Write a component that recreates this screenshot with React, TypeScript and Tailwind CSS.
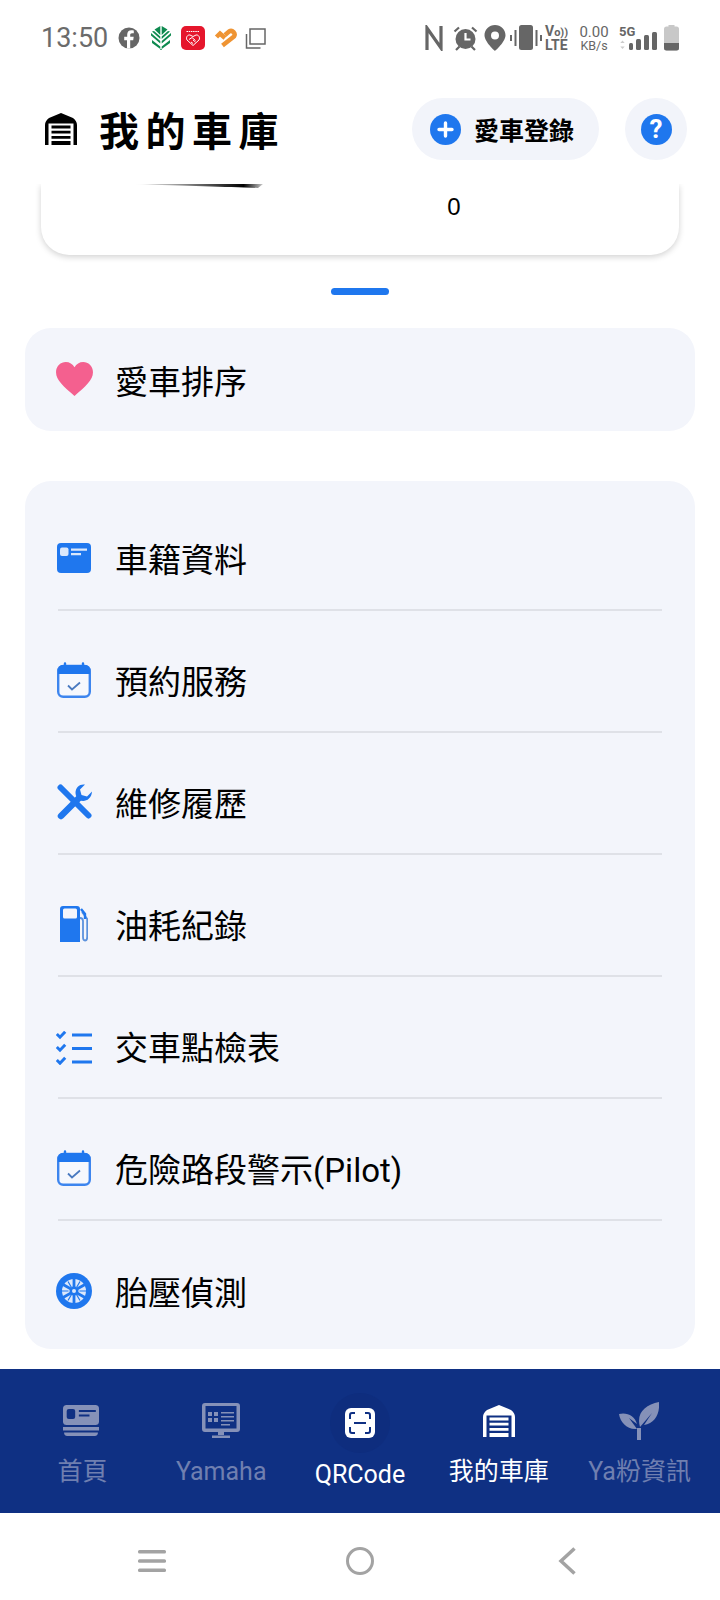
import type { ReactNode } from 'react';

const BLUE = '#1f77ee';
const FADED = '#8591b8';
const NAV = '#0f3083';

function StatusLeft() {
  return (
    <div className="flex items-center">
      <span className="text-[27px] leading-none text-[#6b6b6b] font-['Roboto',sans-serif] ml-[41px] w-[75px]">13:50</span>
      <svg width="22" height="22" viewBox="0 0 22 22" className="ml-[2px]">
        <circle cx="11" cy="11" r="10.500" fill="#666" />
        <path d="M12.200 21.500V13.200h3l.5-3.400h-3.500V8c0-1 .5-1.700 1.800-1.700h1.800V3.500c-.8-.1-1.600-.2-2.400-.2-2.500 0-4.200 1.500-4.200 4.200v2.300H6.200v3.400h2.800v8.300z" fill="#fff" />
      </svg>
      <svg width="20" height="24" viewBox="0 0 20 24" className="ml-[11px]">
        <path d="M9.300 0 3.500 3.500 9.300 9zM10.700 0l5.800 3.500L10.700 9zM1 5.500 9.300 13v-2.500L3 5zM19 5.500 10.700 13v-2.500L17 5zM0 9.500l9.300 8V15L0 7zM20 9.500l-9.300 8V15L20 7zM1 14l8.300 6.500V24h1.400v-3.500L19 14v3l-8.300 6h-1.400L1 17z" fill="#0e8a4f" />
      </svg>
      <div className="ml-[10px] w-[24px] h-[24px] rounded-[5px] bg-[#e5162c] flex items-center justify-center">
        <svg width="18" height="18" viewBox="0 0 18 18" fill="none" stroke="#fff" strokeWidth="1">
          <path d="M2.500 2.500h13" strokeDasharray="1.500 .7" />
          <path d="M9 16.500 3 11C1.500 8.500 3.500 5.500 6 6l3 1.500L12 6c2.500-.5 4.500 2.500 3 5z" />
          <path d="M5 10.500l3-2 3.500 3M7 13l2 1.500M9 11l2.500 2" />
        </svg>
      </div>
      <svg width="24" height="20" viewBox="0 0 24 20" className="ml-[9px]" fill="none" stroke="#ef9433" strokeWidth="4.500">
        <path d="M2.500 9 6 5.500 11 10" />
        <path d="M8.500 17.500 20 8.500C22 5.500 18.500 1.500 15 3.500L11 7" />
      </svg>
      <svg width="21" height="21" viewBox="0 0 21 21" className="ml-[7px]" fill="none" stroke="#666" strokeWidth="1.500">
        <rect x="5" y="1" width="15" height="15" />
        <path d="M1.500 6v14h14" />
      </svg>
    </div>
  );
}

function StatusRight() {
  return (
    <div className="flex items-center mr-[41px]">
      <svg width="18" height="26" viewBox="0 0 18 26" fill="none" stroke="#666" strokeWidth="3.200" className="ml-[1px]">
        <path d="M2 25V3L16 23V1" />
      </svg>
      <svg width="27" height="26" viewBox="0 0 26 26" className="ml-[9px]" fill="none">
        <circle cx="13" cy="14" r="10" fill="#666" />
        <path d="M13 8v6.500h5" stroke="#fff" strokeWidth="2.200" />
        <path d="M2 6.500 6.500 2.500M24 6.500 19.500 2.500M3.500 25 7 21.500M22.500 25 19 21.500" stroke="#666" strokeWidth="2.200" />
      </svg>
      <svg width="22" height="26" viewBox="0 0 21 26" className="ml-[5px]">
        <path fillRule="evenodd" d="M10.500 0C4.700 0 0 4.600 0 10.300 0 17 10.500 26 10.500 26S21 17 21 10.300C21 4.600 16.300 0 10.500 0zm0 6.500a4 4 0 1 1 0 8 4 4 0 0 1 0-8z" fill="#666" />
      </svg>
      <svg width="32" height="26" viewBox="0 0 32 26" className="ml-[4px]">
        <rect x="9" y="0" width="14" height="25" rx="2.500" fill="#666" />
        <path d="M1 10v6M5.500 5v16M26.500 5v16M31 10v6" stroke="#666" strokeWidth="2" />
      </svg>
      <div className="ml-[3px] w-[25px] h-[28px] flex flex-col font-['Roboto',sans-serif] font-bold text-[#666] leading-none items-start">
        <span className="text-[14px] h-[14px] whitespace-nowrap">V<span className="text-[11px]">o))</span></span>
        <span className="text-[14px] leading-[14px]">LTE</span>
      </div>
      <div className="ml-[9px] w-[30px] flex flex-col items-center font-['Roboto',sans-serif] text-[#666]">
        <span className="text-[15px] leading-[14px]">0.00</span>
        <span className="text-[12.500px] leading-[13px]">KB/s</span>
      </div>
      <div className="ml-[10px] w-[40px] h-[26px] relative">
        <span className="absolute left-0 top-0 text-[13px] leading-none font-bold text-[#666] font-['Roboto',sans-serif]">5G</span>
        <svg width="40" height="26" viewBox="0 0 40 26">
          <path d="M3.500 15.500l2.200 2.500h-4.400zM3.500 24l2.200-2.500h-4.400z" fill="#ccc" />
          <rect x="10" y="18" width="4" height="7" rx="1.500" fill="#666" />
          <rect x="17" y="14" width="5" height="11" rx="1.500" fill="#666" />
          <rect x="25" y="10" width="5" height="15" rx="1.500" fill="#666" />
          <rect x="33" y="7" width="5" height="18" rx="1.500" fill="#666" />
        </svg>
      </div>
      <svg width="15" height="26" viewBox="0 0 15 26" className="ml-[5px]">
        <rect x="4.500" y="0" width="6" height="2" fill="#c8c8c8" />
        <rect x="0" y="1.500" width="15" height="24" rx="2.500" fill="#c8c8c8" />
        <path d="M0 18h15v5a2.500 2.500 0 0 1-2.500 2.500h-10A2.500 2.500 0 0 1 0 23z" fill="#666" />
      </svg>
    </div>
  );
}

function GarageIcon({ color, size }: { color: string; size: number }) {
  return (
    <svg width={size} height={size} viewBox="0 0 32 32">
      <path d="M16 0 4 5C1.500 7 0 9 0 12v20h3.500V10.500h25V32H32V12c0-3-1.500-5-4-7z" fill={color} />
      <path d="M6.500 12.500h19v2.900h-19zM6.500 17.700h19v2.900h-19zM6.500 22.900h19v2.900h-19zM6.500 28.100h19V32h-19z" fill={color} />
    </svg>
  );
}

function CalendarIcon() {
  return (
    <svg width="34" height="36" viewBox="0 0 34 36">
      <path d="M8 1.500v4M26 1.500v4" stroke={BLUE} strokeWidth="2.400" strokeLinecap="round" />
      <rect x="1.200" y="4" width="31.600" height="30.800" rx="5" fill="#f6f8fd" stroke="#3d85ee" strokeWidth="2.400" />
      <path d="M6 3h22a5 5 0 0 1 5 5v4H1V8a5 5 0 0 1 5-5z" fill={BLUE} />
      <path d="M11 23.500l4 4 8-7" fill="none" stroke="#4a7ac0" strokeWidth="1.800" />
    </svg>
  );
}

function CardIcon() {
  return (
    <svg width="34" height="30" viewBox="0 0 34 30">
      <rect x="0" y="0" width="34" height="30" rx="4" fill={BLUE} />
      <rect x="3" y="4.500" width="8.500" height="8.500" rx="2" fill="#dbe8fb" />
      <path d="M14 5.500h16v2.200H14zM14 10h10v2.200H14z" fill="#dbe8fb" />
    </svg>
  );
}

function ToolsIcon() {
  return (
    <svg width="36" height="36" viewBox="0 0 36 36" fill="none">
      <path d="M3.500 3.500 31.500 31.500" stroke={BLUE} strokeWidth="6" strokeLinecap="round" />
      <path d="M4 32 22 14" stroke={BLUE} strokeWidth="6.500" strokeLinecap="round" />
      <path d="M35 7.500l-5 5-5.500-1.500-1.500-5.500 5-5c-5-.8-9.500 2.500-9.500 8.500 0 3 2 5.500 4 7 4.500 2.500 12 0 12.500-8.500z" fill={BLUE} />
    </svg>
  );
}

function FuelIcon() {
  return (
    <svg width="28" height="36" viewBox="0 0 28 36" fill="none" className="ml-[3px]">
      <path d="M3 0h14a3 3 0 0 1 3 3v33H0V3a3 3 0 0 1 3-3z" fill={BLUE} />
      <rect x="3" y="2.500" width="14" height="10" rx="1.500" fill="#f3f5fb" />
      <path d="M20 12c2.500 0 3 1.500 3 3v16c0 2 .8 3.500 2 3.500s2.200-1.500 2.200-3.500V13L22 6" stroke="#5b92dd" strokeWidth="1.800" />
      <path d="M21 3l4 5v5" stroke={BLUE} strokeWidth="2.400" />
    </svg>
  );
}

function ChecklistIcon() {
  return (
    <svg width="36" height="34" viewBox="0 0 36 34" fill="none" stroke={BLUE}>
      <path d="M.800 3l3.200 3.200L9.200.800M.800 16l3.200 3.200 5.200-5.400M.800 29l3.200 3.200 5.200-5.400" strokeWidth="3" />
      <path d="M16 4h20M16 17.500h20M16 31h20" strokeWidth="2.800" />
    </svg>
  );
}

function TireIcon() {
  return (
    <svg width="36" height="36" viewBox="0 0 36 36" fill="none" className="-ml-[1px]">
      <circle cx="18" cy="18" r="18" fill={BLUE} />
      <circle cx="18" cy="18" r="12" fill="#dce8fb" />
      <path d="M18 5v9M7 11.500l8 4.500M7 24.500l8-4.500M18 31v-9M29 11.500 21 16M29 24.500 21 20" stroke={BLUE} strokeWidth="2.800" />
      <path d="M12 8.500l3.500 6M24 8.500l-3.500 6M5.500 18h7M30.500 18h-7M12 27.500l3.500-6M24 27.500l-3.500-6" stroke={BLUE} strokeWidth="1.200" />
      <circle cx="18" cy="18" r="4.500" fill={BLUE} />
      <circle cx="18" cy="18" r="2" fill="#dce8fb" />
    </svg>
  );
}

const menuItems: { label: string; icon: ReactNode }[] = [
  { label: '車籍資料', icon: <CardIcon /> },
  { label: '預約服務', icon: <CalendarIcon /> },
  { label: '維修履歷', icon: <ToolsIcon /> },
  { label: '油耗紀錄', icon: <FuelIcon /> },
  { label: '交車點檢表', icon: <div className="-ml-[1px] mt-[4px]"><ChecklistIcon /></div> },
  { label: '危險路段警示(Pilot)', icon: <CalendarIcon /> },
  { label: '胎壓偵測', icon: <TireIcon /> },
];

function NavItem({ label, active, icon, shift }: { label: string; active?: boolean; icon: ReactNode; shift?: string }) {
  return (
    <div className="flex-1 flex flex-col items-center">
      <div className="h-[44px] mt-[30px] flex items-center justify-center">{icon}</div>
      <span className={`mt-[11px] text-[25px] leading-[36px] whitespace-nowrap ${shift ?? ''} ${active ? 'text-white' : 'text-[#6f7fb0]'}`}>
        {label}
      </span>
    </div>
  );
}

export default function App() {
  return (
    <div className="w-[720px] h-[1600px] bg-white flex flex-col overflow-hidden font-['Roboto','Noto_Sans_CJK_TC',sans-serif]">
      {/* status bar */}
      <div className="h-[72px] pt-[4px] flex items-center justify-between shrink-0">
        <StatusLeft />
        <StatusRight />
      </div>

      {/* header */}
      <div className="h-[112px] shrink-0 flex items-center pl-[45px] pr-[33px] pt-[2px]">
        <GarageIcon color="#000" size={32} />
        <h1 className="ml-[22px] pt-[7px] text-[40px] font-bold leading-none tracking-[6.500px] text-black flex-1">我的車庫</h1>
        <div className="h-[62px] w-[187px] rounded-full bg-[#f2f4fa] flex items-center pl-[18px]">
          <div className="w-[31px] h-[31px] mt-[1px] rounded-full flex items-center justify-center" style={{ background: BLUE }}>
            <svg width="17" height="17" viewBox="0 0 17 17"><path d="M8.500 2v13M2 8.500h13" stroke="#fff" strokeWidth="3.400" strokeLinecap="round" /></svg>
          </div>
          <span className="ml-[13px] pt-[5px] text-[25px] leading-none font-bold text-black">愛車登錄</span>
        </div>
        <div className="ml-[26px] w-[62px] h-[62px] rounded-full bg-[#f2f4fa] flex items-center justify-center">
          <div className="w-[31px] h-[31px] rounded-full flex items-center justify-center text-white text-[26px] font-bold leading-none" style={{ background: BLUE }}>?</div>
        </div>
      </div>

      {/* scrolled content */}
      <div className="flex-1 min-h-0 overflow-hidden">
        <div className="mx-[41px] h-[71px] bg-white rounded-b-[28px] shadow-[0_2px_6px_rgba(0,0,0,0.18)] relative flex justify-center">
          <svg width="130" height="6" viewBox="0 0 130 6" className="absolute left-[92px] top-0">
            <defs>
              <linearGradient id="shade" x1="0" x2="1">
                <stop offset="0" stopColor="#000" stopOpacity="0" />
                <stop offset="0.85" stopColor="#000" />
                <stop offset="1" stopColor="#000" stopOpacity="0.2" />
              </linearGradient>
            </defs>
            <path d="M0 0h130l-5 4c-30-1-70-2-125-4z" fill="url(#shade)" />
          </svg>
          <span className="ml-[188px] mt-[7px] text-[24px] leading-[32px] text-black font-['Liberation_Sans',sans-serif]">0</span>
        </div>

        <div className="mt-[33px] mx-auto w-[58px] h-[7px] rounded-full" style={{ background: BLUE }} />

        <div className="mt-[33px] mx-[25px] h-[103px] rounded-[26px] bg-[#f3f5fb] flex items-center pl-[31px]">
          <svg width="37" height="35" viewBox="0 0 38 36">
            <path d="M19 35C8 25 0 19 0 10.500 0 4 5 0 10 0c4 0 7 2 9 5.500C21 2 24 0 28 0c5 0 10 4 10 10.500C38 19 30 25 19 35z" fill="#f4608f" />
          </svg>
          <span className="ml-[22px] pt-[6px] text-[33px] leading-none text-black">愛車排序</span>
        </div>

        <div className="mt-[50px] mx-[25px] h-[868px] rounded-[26px] bg-[#f3f5fb] px-[33px] pt-[8px]">
          {menuItems.map((item, i) => (
            <div key={i} className={`h-[122px] pt-[22px] flex items-center ${i < menuItems.length - 1 ? 'border-b-2 border-[#dfe1e7]' : ''}`}>
              <div className="w-[57px] -ml-[1px] pr-[1px] mb-[4px] flex items-center justify-start">{item.icon}</div>
              <span className="ml-[1px] text-[33px] leading-none text-black whitespace-nowrap">{item.label}</span>
            </div>
          ))}
        </div>
      </div>

      {/* tab bar */}
      <div className="h-[144px] shrink-0 flex px-[13px]" style={{ background: NAV }}>
        <NavItem
          label="首頁"
          icon={
            <svg width="36" height="32" viewBox="0 0 34 32" preserveAspectRatio="none" className="-ml-[2px]">
              <rect x="0" y="0" width="34" height="20" rx="3.500" fill={FADED} />
              <rect x="3.500" y="4" width="8" height="10" rx="2" fill={NAV} />
              <path d="M15 5h16v2H15zM15 9.500h10v2H15z" fill={NAV} />
              <path d="M0 22h34v3.500H0zM1 27.500h32c0 2-1 3.500-3 3.500H4c-2 0-3-1.500-3-3.500z" fill={FADED} />
            </svg>
          }
        />
        <NavItem
          label="Yamaha"
          icon={
            <svg width="38" height="36" viewBox="0 0 38 36" fill={FADED}>
              <path fillRule="evenodd" d="M3 0h32a3 3 0 0 1 3 3v23a3 3 0 0 1-3 3H3a3 3 0 0 1-3-3V3a3 3 0 0 1 3-3zm.5 3v22.500h31V3z" />
              <path d="M6 9h4v4H6zM12 9h4v4h-4zM6 15h4v4H6zM12 15h4v4h-4zM19 9h13v1.500H19zM19 13h13v1.500H19zM19 17h13v1.500H19zM19 21h9v1.500h-9zM16 29h6v3h-6zM10 32.500h18V35H10z" />
            </svg>
          }
        />
        <div className="flex-1 flex flex-col items-center">
          <div className="mt-[24px] w-[60px] h-[60px] rounded-full bg-[#0e2d7e] flex items-center justify-center">
            <svg width="30" height="30" viewBox="0 0 30 30">
              <rect x="0" y="0" width="30" height="30" rx="6" fill="#fff" />
              <path d="M10 5H7a2 2 0 0 0-2 2v4M20 5h3a2 2 0 0 1 2 2v4M10 25H7a2 2 0 0 1-2-2v-4M20 25h3a2 2 0 0 0 2-2v-4M9 15h12" fill="none" stroke={NAV} strokeWidth="2" />
            </svg>
          </div>
          <span className="mt-[4px] text-[25px] leading-[36px] text-white">QRCode</span>
        </div>
        <NavItem label="我的車庫" active icon={<GarageIcon color="#fff" size={32} />} />
        <NavItem
          label="Ya粉資訊"
          shift="ml-[4px]"
          icon={
            <svg width="40" height="38" viewBox="0 0 40 38" fill={FADED} className="ml-[2px]">
              <path d="M18 38V26h4v12z" />
              <path d="M21 25C17 11 26 3 40 0c1 12-4 21-15 23l8-12z" />
              <path d="M18 27C8 28 1 20 0 12c8-2 16 2 18 10l-8-6z" />
            </svg>
          }
        />
      </div>

      {/* system nav */}
      <div className="h-[87px] shrink-0 bg-white flex items-center pl-[138px] pr-[144px] justify-between pt-[8px]">
        <svg width="28" height="24" viewBox="0 0 28 24" fill="#a3a3a3">
          <rect y="1" width="28" height="3.600" rx="1.500" />
          <rect y="10.200" width="28" height="3.600" rx="1.500" />
          <rect y="19.400" width="28" height="3.600" rx="1.500" />
        </svg>
        <div className="w-[28px] h-[28px] rounded-full border-[3.500px] border-[#a3a3a3] mr-[4px]" />
        <svg width="18" height="28" viewBox="0 0 18 28" fill="none" stroke="#a3a3a3" strokeWidth="3.500">
          <path d="M16.500 1.500 3 14l13.500 12.500" />
        </svg>
      </div>
    </div>
  );
}
